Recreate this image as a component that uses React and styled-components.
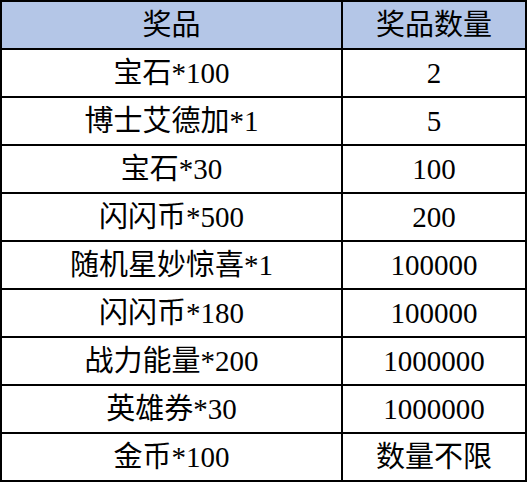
import React from 'react';
import styled, { createGlobalStyle } from 'styled-components';

const GlobalStyle = createGlobalStyle`
  html, body {
    margin: 0;
    padding: 0;
    background: #ffffff;
  }
`;

const Table = styled.div`
  display: grid;
  grid-template-columns: 339px 182px;
  grid-auto-rows: 46px;
  gap: 2px;
  padding: 2px;
  width: 527px;
  box-sizing: border-box;
  background: #000;
  font-family: "Liberation Serif", "Noto Sans CJK SC", serif;
  font-size: 29px;
  color: #000;
`;

const Cell = styled.div`
  display: flex;
  align-items: center;
  justify-content: center;
  background: ${props => props.head ? '#b4c6e7' : '#ffffff'};
  line-height: 1;
  padding-top: 1px;
`;

const prizes = [
  ['宝石*100', '2'],
  ['博士艾德加*1', '5'],
  ['宝石*30', '100'],
  ['闪闪币*500', '200'],
  ['随机星妙惊喜*1', '100000'],
  ['闪闪币*180', '100000'],
  ['战力能量*200', '1000000'],
  ['英雄券*30', '1000000'],
  ['金币*100', '数量不限'],
];

const App = () => {
  return (
    <>
      <GlobalStyle />
      <Table>
        <Cell head>奖品</Cell>
        <Cell head>奖品数量</Cell>
        {prizes.map(([name, count]) => (
          <React.Fragment key={name}>
            <Cell>{name}</Cell>
            <Cell>{count}</Cell>
          </React.Fragment>
        ))}
      </Table>
    </>
  );
};

export default App;
